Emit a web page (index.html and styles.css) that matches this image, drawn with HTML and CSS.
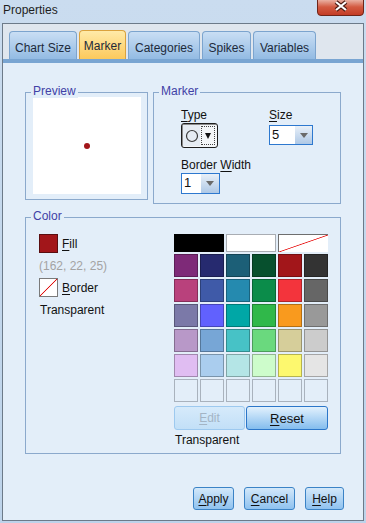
FILE: index.html
```html
<!DOCTYPE html>
<html lang="en">

<head>
    <meta charset="UTF-8">
    <meta name="viewport" content="width=device-width, initial-scale=1.0">
    <title>Properties</title>
    <link rel="stylesheet" href="styles.css">
</head>

<body>
    <div class="titlebar">
        <span class="title">Properties</span>
        <a href="javascript:;" class="close">
            <svg width="47" height="16" viewBox="0 0 47 16">
                <defs>
                    <linearGradient id="closebg" x1="0" y1="0" x2="0" y2="1">
                        <stop offset="0" stop-color="#eab0a2" />
                        <stop offset="0.45" stop-color="#d35a41" />
                        <stop offset="1" stop-color="#c23a24" />
                    </linearGradient>
                </defs>
                <path d="M0.5 0 V12 A3.5 3.5 0 0 0 4 15.5 H43 A3.5 3.5 0 0 0 46.5 12 V0" fill="url(#closebg)" stroke="#6e2519" />
                <path d="M19 2 L29 10 M29 2 L19 10" stroke="#4b1a12" stroke-width="4.2" />
                <path d="M19 2 L29 10 M29 2 L19 10" stroke="#fff" stroke-width="2.2" />
            </svg>
        </a>
    </div>

    <div class="client">
        <ul class="tabs">
            <li class="tab-size">Chart Size</li>
            <li class="tab-marker current">Marker</li>
            <li class="tab-categories">Categories</li>
            <li class="tab-spikes">Spikes</li>
            <li class="tab-variables">Variables</li>
        </ul>

        <div class="panel">
            <div class="top-row">
                <div class="group preview">
                    <span class="legend">Preview</span>
                    <div class="canvas"><span class="dot"></span></div>
                </div>

                <div class="group marker">
                    <span class="legend">Marker</span>
                    <div class="marker-row">
                        <div class="field-type">
                            <span class="label"><u>T</u>ype</span>
                            <div class="combo-type">
                                <span class="type-value">
                                    <svg width="14" height="14" viewBox="0 0 14 14">
                                        <circle cx="7" cy="7" r="5.5" fill="none" stroke="#3a3a3a" stroke-width="1.2" />
                                    </svg>
                                </span>
                                <span class="type-arrow"><i class="tri-black"></i></span>
                            </div>
                        </div>
                        <div class="field-size">
                            <span class="label"><u>S</u>ize</span>
                            <div class="combo combo-size">
                                <span class="combo-value">5</span>
                                <span class="combo-btn"><i class="tri"></i></span>
                            </div>
                        </div>
                    </div>
                    <div class="field-width">
                        <span class="label">Border <u>W</u>idth</span>
                        <div class="combo combo-width">
                            <span class="combo-value">1</span>
                            <span class="combo-btn"><i class="tri"></i></span>
                        </div>
                    </div>
                </div>
            </div>

            <div class="group color">
                <span class="legend">Color</span>
                <div class="color-left">
                    <div class="swatch-row">
                        <span class="swatch swatch-fill"></span>
                        <span class="swatch-label"><u>F</u>ill</span>
                    </div>
                    <p class="rgb">(162, 22, 25)</p>
                    <div class="swatch-row swatch-row-border">
                        <span class="swatch swatch-none"></span>
                        <span class="swatch-label"><u>B</u>order</span>
                    </div>
                    <p class="note">Transparent</p>
                </div>

                <div class="palette">
                    <div class="palette-grid">
                        <span class="cell wide cell-black"></span>
                        <span class="cell wide cell-white"></span>
                        <span class="cell wide cell-none"></span>

                        <span class="cell" style="background:#7e2a78"></span>
                        <span class="cell" style="background:#262a6f"></span>
                        <span class="cell" style="background:#1c5f77"></span>
                        <span class="cell" style="background:#07502e"></span>
                        <span class="cell" style="background:#a2161a"></span>
                        <span class="cell" style="background:#333333"></span>

                        <span class="cell" style="background:#b9417c"></span>
                        <span class="cell" style="background:#3f5aa8"></span>
                        <span class="cell" style="background:#258aaf"></span>
                        <span class="cell" style="background:#0b8c4a"></span>
                        <span class="cell" style="background:#f3343c"></span>
                        <span class="cell" style="background:#666666"></span>

                        <span class="cell" style="background:#7b79a8"></span>
                        <span class="cell" style="background:#6161fe"></span>
                        <span class="cell" style="background:#00a7a6"></span>
                        <span class="cell" style="background:#30b84a"></span>
                        <span class="cell" style="background:#f99a1e"></span>
                        <span class="cell" style="background:#999999"></span>

                        <span class="cell" style="background:#b898c8"></span>
                        <span class="cell" style="background:#77a6d6"></span>
                        <span class="cell" style="background:#47c2c6"></span>
                        <span class="cell" style="background:#6ad97e"></span>
                        <span class="cell" style="background:#d6ce9a"></span>
                        <span class="cell" style="background:#cccccc"></span>

                        <span class="cell" style="background:#e0bdf2"></span>
                        <span class="cell" style="background:#aacdee"></span>
                        <span class="cell" style="background:#b4e5e6"></span>
                        <span class="cell" style="background:#cdfccb"></span>
                        <span class="cell" style="background:#fdf86e"></span>
                        <span class="cell" style="background:#e5e5e5"></span>

                        <span class="cell cell-empty"></span>
                        <span class="cell cell-empty"></span>
                        <span class="cell cell-empty"></span>
                        <span class="cell cell-empty"></span>
                        <span class="cell cell-empty"></span>
                        <span class="cell cell-empty"></span>
                    </div>
                    <div class="palette-actions">
                        <a href="javascript:;" class="btn btn-edit"><u>E</u>dit</a>
                        <a href="javascript:;" class="btn btn-reset"><u>R</u>eset</a>
                    </div>
                    <p class="palette-note">Transparent</p>
                </div>
            </div>

            <div class="actions">
                <a href="javascript:;" class="btn btn-apply"><u>A</u>pply</a>
                <a href="javascript:;" class="btn btn-cancel"><u>C</u>ancel</a>
                <a href="javascript:;" class="btn btn-help"><u>H</u>elp</a>
            </div>
        </div>
    </div>
</body>

</html>
```

FILE: styles.css
```css
* {
    margin: 0;
    padding: 0;
    box-sizing: border-box;
}

ul {
    list-style: none;
}

body {
    width: 366px;
    height: 523px;
    overflow: hidden;
    background: linear-gradient(#cadcef, #bdd3ea);
    font-family: "Liberation Sans", Arial, sans-serif;
    font-size: 12px;
    color: #1a1a1a;
}

u {
    text-decoration: underline;
    text-underline-offset: 2px;
}

/* title bar */
.titlebar {
    display: flex;
    justify-content: space-between;
    align-items: flex-start;
    height: 23px;
    padding: 0 2px 0 3px;
}

.title {
    margin-top: 3px;
    line-height: 14px;
    color: #1e1e1e;
}

.close {
    display: block;
    width: 47px;
    height: 16px;
}

.close svg {
    display: block;
}

/* window body */
.client {
    height: 498px;
    margin: 0 2px;
    border: 1px solid #6c7a89;
    background: #e3eef9;
}

.tabs {
    display: flex;
    align-items: flex-end;
    gap: 2px;
    height: 39px;
    padding-left: 6px;
    background: #dfe6ee;
    border-bottom: 4px solid #79a5d2;
}

.tabs li {
    height: 28px;
    padding-top: 9px;
    line-height: 14px;
    text-align: center;
    border: 1px solid #7ca4ce;
    border-bottom: 0;
    border-radius: 4px 4px 0 0;
    background: linear-gradient(#c9def4, #93bbe3);
    color: #1d2a3a;
}

.tabs li.current {
    height: 29px;
    padding-top: 8px;
    border-color: #dba23c;
    background: linear-gradient(#ffeaa8, #fcc95c);
}

.tab-size {
    width: 68px;
}

.tab-marker {
    width: 47px;
}

.tab-categories {
    width: 72px;
}

.tab-spikes {
    width: 49px;
}

.tab-variables {
    width: 63px;
}

.panel {
    padding: 29px 19px 0 22px;
}

/* group boxes */
.top-row {
    display: flex;
    align-items: flex-start;
    gap: 5px;
}

.group {
    position: relative;
    border: 1px solid #8ba9cc;
}

.legend {
    position: absolute;
    top: -9px;
    left: 5px;
    padding: 0 2px;
    line-height: 14px;
    background: #e3eef9;
    color: #4141a6;
}

.preview {
    width: 123px;
    height: 108px;
}

.canvas {
    display: flex;
    align-items: center;
    justify-content: center;
    width: 108px;
    height: 97px;
    margin: 4px 0 0 7px;
    background: #fff;
}

.dot {
    width: 6px;
    height: 6px;
    border-radius: 50%;
    background: #a2161a;
}

.marker {
    width: 188px;
    height: 112px;
    padding: 15px 0 0 27px;
}

.marker-row {
    display: flex;
}

.field-type {
    width: 88px;
}

.label {
    display: block;
    line-height: 14px;
    color: #111;
}

.field-width {
    margin-top: 10px;
}

/* combo boxes */
.combo-type {
    display: flex;
    width: 37px;
    height: 25px;
    margin-top: 1px;
    padding: 1px;
    border: 1px solid #1e1e1e;
    border-radius: 3px;
    background: #f4f6f8;
    box-shadow: inset 1px 1px 0 #8c8c8c;
}

.type-value {
    display: flex;
    align-items: center;
    justify-content: center;
    width: 17px;
    background: #e6ecf3;
}

.type-arrow {
    display: flex;
    flex: 1;
    align-items: center;
    justify-content: center;
    margin: 1px;
    border: 1px dotted #444;
}

.tri-black {
    width: 0;
    height: 0;
    border-top: 6px solid #111;
    border-left: 3px solid transparent;
    border-right: 3px solid transparent;
}

.combo {
    display: flex;
    border: 1px solid #2d78cf;
    background: #fff;
}

.combo-size {
    width: 44px;
    height: 20px;
    margin-top: 3px;
}

.combo-width {
    width: 39px;
    height: 21px;
    margin-top: 1px;
}

.combo-value {
    flex: 1;
    padding-left: 2px;
    font-size: 13px;
    line-height: 18px;
    color: #111;
}

.combo-btn {
    display: flex;
    align-items: center;
    justify-content: center;
    width: 17px;
    background: linear-gradient(#e9f0f8, #aec8e6);
}

.combo-width .combo-btn {
    width: 18px;
}

.tri {
    width: 0;
    height: 0;
    border-top: 5px solid #6a6a6a;
    border-left: 4px solid transparent;
    border-right: 4px solid transparent;
}

/* colour group */
.color {
    display: flex;
    width: 316px;
    height: 237px;
    margin-top: 13px;
    padding: 16px 0 0 13px;
}

.color-left {
    width: 135px;
}

.swatch-row {
    display: flex;
    align-items: center;
    gap: 4px;
    height: 19px;
}

.swatch-row-border {
    margin-top: 5px;
}

.swatch {
    width: 19px;
    height: 19px;
}

.swatch-fill {
    border: 1px solid #5a0e10;
    background: #a2161a;
}

.swatch-none {
    border: 1px solid #7a7a7a;
    background: linear-gradient(to bottom right, #fff calc(50% - 0.8px), #e01010, #fff calc(50% + 0.8px));
}

.swatch-label {
    line-height: 14px;
    color: #111;
}

.rgb {
    margin-top: 6px;
    line-height: 14px;
    color: #a3a3a3;
}

.note {
    margin-top: 6px;
    padding-left: 1px;
    line-height: 14px;
    color: #111;
}

.palette {
    width: 154px;
}

.palette-grid {
    display: grid;
    grid-template-columns: repeat(6, 24px);
    grid-template-rows: 18px repeat(6, 23px);
    gap: 2px;
}

.cell {
    border: 1px solid rgba(0, 0, 0, 0.28);
}

.cell.wide {
    grid-column: span 2;
}

.cell-black {
    border-color: #000;
    background: #000;
}

.cell-white {
    border: 1px solid #a9adb3;
    background: #fff;
}

.cell-none {
    border: 0;
    border-top: 1px solid #6e6e6e;
    border-left: 1px solid #6e6e6e;
    background: linear-gradient(to bottom right, #fff calc(50% - 0.8px), #e81818, #fff calc(50% + 0.8px));
}

.cell-empty {
    border-color: #a9b2bd;
}

.palette-actions {
    display: flex;
    gap: 1px;
    margin-top: 4px;
}

.palette-note {
    margin-top: 3px;
    padding-left: 1px;
    line-height: 14px;
    color: #111;
}

/* buttons */
.btn {
    display: flex;
    align-items: center;
    justify-content: center;
    height: 23px;
    border: 1px solid #3b83c6;
    border-radius: 3px;
    background: linear-gradient(#d3e8fa, #8fc2ef);
    color: #111;
    text-decoration: none;
}

.btn-edit {
    width: 71px;
    height: 24px;
    border-color: #9dc9ef;
    background: linear-gradient(#d6eafb, #c2dff7);
    color: #a3b4c5;
}

.btn-reset {
    width: 82px;
    height: 24px;
    border-color: #2b76c9;
    background: linear-gradient(#e2f1fd, #84bdee);
    font-size: 13px;
}

.actions {
    display: flex;
    justify-content: flex-end;
    gap: 10px;
    margin-top: 33px;
}

.btn-apply {
    width: 41px;
}

.btn-cancel {
    width: 51px;
}

.btn-help {
    width: 39px;
}
```
